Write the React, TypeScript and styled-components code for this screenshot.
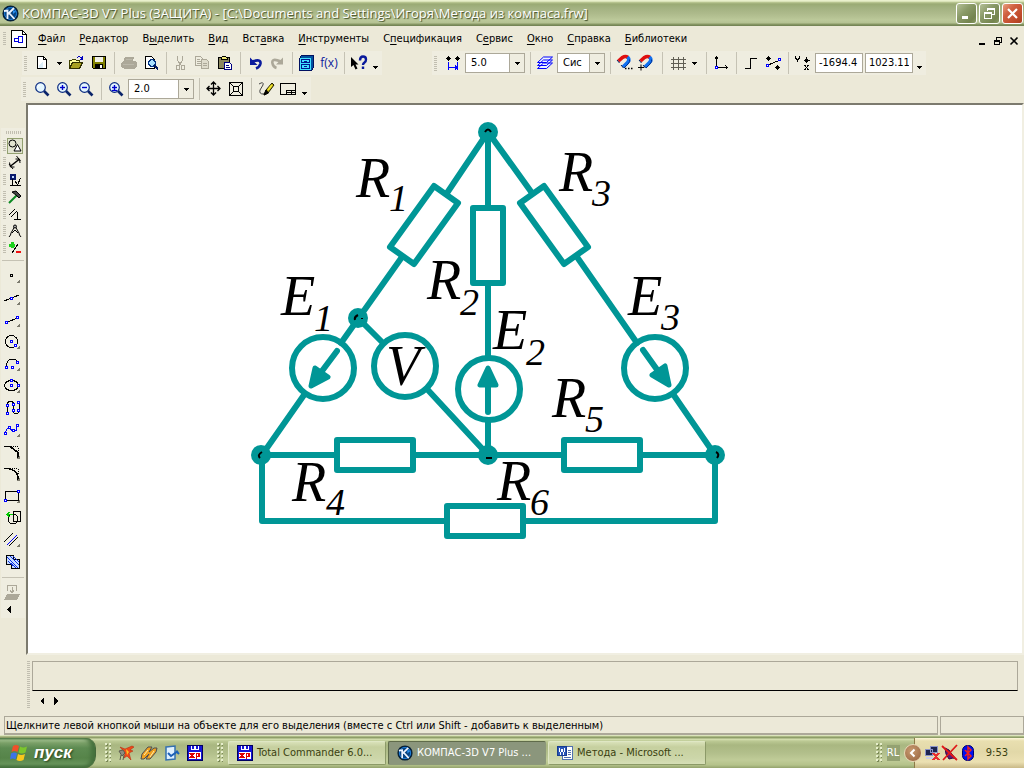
import React from "react";
import styled, { createGlobalStyle } from "styled-components";

const UI_FONT = '"DejaVu Sans Condensed", "DejaVu Sans", Tahoma, sans-serif';
const FACE = "#ece9d8";
const BAND = "#efede0";
const EDGE = "#aca899";
const TEAL = "#009696";

const GlobalStyle = createGlobalStyle`
  *, *::before, *::after { box-sizing: border-box; }
  body { margin: 0; background: ${FACE}; }
  button, input, select { font: inherit; color: inherit; margin: 0; }
`;

const Screen = styled.div`
  display: flex;
  flex-direction: column;
  min-height: 100vh;
  overflow: hidden;
  background: ${FACE};
  color: #000;
  font: 11px/14px ${UI_FONT};
`;

/* ---------- title bar ---------- */

const TitleBar = styled.header`
  display: flex;
  align-items: center;
  height: 26px;
  padding: 0 1px 0 2px;
  gap: 3px;
  background: linear-gradient(#e0e8c0 0, #f2f8d8 1px, #c0cc98 2px, #9aaa74 4px, #a3b281 8px, #aebb8c 14px, #bcc99a 20px, #b4c192 23px, #8c9c68 24px, #6e7e50 26px);
`;

const Title = styled.h1`
  flex: 1;
  min-width: 0;
  margin: 0;
  overflow: hidden;
  white-space: nowrap;
  color: #fff;
  font: 500 13px/18px "Open Sans", "Noto Sans", sans-serif;
  text-shadow: 1px 1px 1px #3c4a24;
`;

const CaptionButtons = styled.div`
  display: flex;
  gap: 2px;
`;

const CaptionButton = styled.button<{ $close?: boolean }>`
  display: grid;
  place-items: center;
  width: 21px;
  height: 21px;
  padding: 0;
  border: 1px solid #fff;
  border-radius: 3px;
  background: ${(p) =>
    p.$close
      ? "linear-gradient(135deg, #e8a080 0, #d06040 35%, #c04a2a 75%, #a84020 100%)"
      : "linear-gradient(135deg, #b4c096 0, #8a9a68 40%, #74844e 80%, #8a9a64 100%)"};
`;

/* ---------- menu ---------- */

const MenuRow = styled.nav`
  display: flex;
  align-items: center;
  height: 25px;
  padding: 0 3px 0 1px;
`;

const DocIcon = styled.span`
  display: flex;
  margin: 0 11px 0 0;
`;

const MenuList = styled.ul`
  display: flex;
  flex: 1;
  gap: 14px;
  margin: 0;
  padding: 0;
  list-style: none;
`;

const MenuButton = styled.button`
  display: block;
  padding: 0;
  border: 0;
  background: none;
  white-space: nowrap;

  u { text-underline-offset: 2px; }
`;

const ChildButtons = styled.div`
  display: flex;
  gap: 2px;
  padding-top: 4px;
`;

const PlainButton = styled.button`
  display: grid;
  place-items: center;
  width: 14px;
  height: 14px;
  padding: 0;
  border: 0;
  background: none;
`;

/* ---------- tool bars ---------- */

const ToolRow = styled.div<{ $indent: number }>`
  display: flex;
  height: 26px;
  padding-left: ${(p) => p.$indent}px;
  gap: 50px;
`;

const ToolGroup = styled.div`
  display: flex;
  align-items: center;
  height: 24px;
  background: ${BAND};
`;

const Grip = styled.span<{ $h?: number }>`
  flex: none;
  width: 3px;
  height: ${(p) => p.$h ?? 15}px;
  margin: 0 5px 0 2px;
  background: repeating-linear-gradient(#c1beb0 0 1px, transparent 1px 2px);
`;

const ToolButton = styled.button`
  display: grid;
  place-items: center;
  flex: none;
  width: 22px;
  height: 22px;
  padding: 0;
  border: 0;
  background: none;
`;

const Divider = styled.span`
  flex: none;
  width: 1px;
  height: 22px;
  margin: 0 3px 0 4px;
  background: #c5c2b4;
`;

const DropButton = styled.button<{ $w?: number; $low?: boolean }>`
  display: grid;
  place-items: center;
  flex: none;
  width: ${(p) => p.$w ?? 12}px;
  height: 22px;
  padding: ${(p) => (p.$low ? "8px 2px 0 0" : "0 2px 0 0")};
  border: 0;
  background: none;
`;

const Combo = styled.span<{ $w: number }>`
  position: relative;
  flex: none;
  width: ${(p) => p.$w}px;
  height: 20px;
  margin: 0 1px;

  select {
    width: 100%;
    height: 20px;
    padding: 0 0 0 5px;
    border: 1px solid ${EDGE};
    border-radius: 0;
    background: #fff;
    appearance: none;
  }
`;

const ComboArrow = styled.span`
  position: absolute;
  top: 1px;
  right: 1px;
  display: grid;
  place-items: center;
  width: 15px;
  height: 18px;
  border-left: 1px solid ${EDGE};
  background: ${BAND};
  pointer-events: none;
`;

const CoordInput = styled.input`
  flex: none;
  width: 48px;
  height: 20px;
  margin: 0 1px;
  padding: 0 3px 1px;
  border: 1px solid ${EDGE};
  border-radius: 0;
  background: #fff;
`;

/* ---------- work area ---------- */

const WorkArea = styled.main`
  display: flex;
  flex: 1;
  min-height: 552px;
`;

const SidePanel = styled.aside`
  flex: none;
  width: 26px;
  padding: 25px 1px 0;
`;

const SideBand = styled.div`
  display: flex;
  flex-direction: column;
  align-items: center;
  height: 490px;
  padding-top: 3px;
  background: ${BAND};
`;

const TopGrip = styled.span`
  width: 15px;
  height: 3px;
  margin-bottom: 3px;
  background: repeating-linear-gradient(90deg, #c1beb0 0 1px, transparent 1px 2px);
`;

const ModeRow = styled.div`
  display: flex;
  align-items: center;
  align-self: stretch;
  height: 17px;
  gap: 1px;
  padding-left: 2px;
`;

const ModeGrip = styled.span`
  width: 3px;
  height: 11px;
  background: repeating-linear-gradient(#c1beb0 0 1px, transparent 1px 2px);
`;

const ModeButton = styled.button<{ $on?: boolean }>`
  display: grid;
  place-items: center;
  width: 16px;
  height: 16px;
  padding: 0;
  border: 1px solid ${(p) => (p.$on ? "#93a070" : "transparent")};
  background: ${(p) => (p.$on ? "#e2e4d0" : "none")};
`;

const SideRule = styled.span`
  width: 22px;
  height: 1px;
  margin: 4px 0;
  background: #c5c2b4;
`;

const SideTool = styled.button`
  display: grid;
  place-items: center;
  width: 22px;
  height: 22px;
  padding: 0 2px 0 0;
  border: 0;
  background: none;
`;

const SideMore = styled(SideTool)`
  justify-items: start;
  height: 12px;
  padding: 0 0 0 2px;
`;

const Canvas = styled.section`
  flex: 1;
  min-width: 0;
  padding: 11px 0 0 212px;
  overflow: hidden;
  border-style: solid;
  border-width: 2px;
  border-color: #7c7a6e #f1efe2 #f1efe2 #7c7a6e;
  background: #fff;
`;

const Schematic = styled.svg`
  display: block;
  fill: none;
  stroke: ${TEAL};
  stroke-width: 6px;
  stroke-linejoin: round;
  stroke-linecap: round;

  text {
    fill: #000;
    stroke: none;
    font-family: "Liberation Serif", "Times New Roman", serif;
    font-style: italic;
  }
`;

/* ---------- property panel and status ---------- */

const PropertyPanel = styled.section`
  display: flex;
  height: 61px;
  padding: 6px 6px 0 27px;
  gap: 2px;
`;

const PanelGrip = styled.span`
  width: 3px;
  height: 48px;
  background: repeating-linear-gradient(#c1beb0 0 1px, transparent 1px 2px);
`;

const PanelBody = styled.div`
  flex: 1;
`;

const PanelBox = styled.div`
  height: 30px;
  border: 1px solid ${EDGE};
  border-bottom-color: #000;
`;

const PanelArrows = styled.div`
  display: flex;
  padding: 3px 0 0 3px;
`;

const StatusBar = styled.footer`
  display: flex;
  height: 19px;
  padding-left: 4px;
  gap: 2px;
`;

const StatusCell = styled.div<{ $w?: number }>`
  flex: ${(p) => (p.$w ? `0 0 ${p.$w}px` : "1")};
  min-width: 0;
  overflow: hidden;
  padding: 2px 1px;
  border: 1px solid ${EDGE};
  border-bottom-width: 2px;
  white-space: nowrap;
`;

/* ---------- task bar ---------- */

const TaskBar = styled.div`
  display: flex;
  align-items: stretch;
  height: 33px;
  padding-top: 3px;
  background: linear-gradient(#eef2d8 0, #c8d4a0 1px, #8e9e68 2px, #8e9e68 3px, #d8e2b4 4px, #bcc994 6px, #a9b781 10px, #b2bf8b 18px, #c0cc98 25px, #b4c28a 30px, #93a26c 33px);
`;

const StartButton = styled.button`
  display: flex;
  align-items: center;
  width: 96px;
  gap: 5px;
  padding: 0 0 1px 10px;
  border: 0;
  border-right: 1px solid #44683a;
  border-radius: 0 10px 12px 0;
  background: linear-gradient(#4f7a48 0, #a4c290 2px, #7aa068 5px, #5d8b52 10px, #568449 20px, #66935a 26px, #3f6b38 30px);
  box-shadow: inset -4px 0 4px #45703c;
  color: #fff;
  font: italic bold 17px/22px "Liberation Sans", Arial, sans-serif;
  text-shadow: 1px 1px 2px #24401c;
`;

const Dots = styled.span`
  align-self: center;
  width: 6px;
  height: 20px;
  margin: 0 5px 0 9px;
  background:
    radial-gradient(circle at 1px 1px, #e6eecb 1px, transparent 1px) 0 0 / 4px 4px,
    radial-gradient(circle at 2px 2px, #7c8a58 1px, transparent 1px) 0 0 / 4px 4px;
`;

const QuickLaunch = styled.div`
  display: flex;
  align-items: center;
  padding-right: 3px;
  gap: 3px;
`;

const QuickButton = styled.button`
  display: grid;
  place-items: center;
  width: 20px;
  height: 22px;
  padding: 0;
  border: 0;
  background: none;
`;

const Tasks = styled.div`
  display: flex;
  flex: 1;
  align-items: center;
  min-width: 0;
  gap: 2px;
`;

const Task = styled.button<{ $active?: boolean }>`
  display: flex;
  align-items: center;
  flex: 0 1 158px;
  min-width: 0;
  height: 24px;
  gap: 4px;
  padding: 0 6px 0 8px;
  overflow: hidden;
  border: 1px solid ${(p) => (p.$active ? "#5f6b4a" : "#dfe7c4")};
  border-right-color: ${(p) => (p.$active ? "#8c987a" : "#8c9a68")};
  border-bottom-color: ${(p) => (p.$active ? "#8c987a" : "#8c9a68")};
  border-radius: 2px;
  background: ${(p) => (p.$active ? "#8b967c" : "linear-gradient(#d9e1b9 0, #c6d09f 5px, #ccd6a9 16px, #d6dfb6 22px)")};
  color: ${(p) => (p.$active ? "#fff" : "#3a3f10")};
  white-space: nowrap;
`;

const Language = styled.span`
  align-self: center;
  width: 13px;
  height: 16px;
  overflow: hidden;
  background: #94a272;
  color: #fff;
  line-height: 16px;
`;

const Tray = styled.div`
  display: flex;
  align-items: center;
  gap: 2px;
  margin-left: 14px;
  padding-right: 16px;
  border-left: 1px solid #8c7a48;
  background: linear-gradient(#fdf6d8 0, #e8dfb0 3px, #e2d8a8 14px, #ebe0b2 24px, #c9b987 30px);
`;

const TrayToggle = styled.button`
  display: grid;
  place-items: center;
  width: 18px;
  height: 18px;
  margin-left: -11px;
  padding: 0;
  border: 1px solid #e8d8b8;
  border-radius: 50%;
  background: radial-gradient(circle at 40% 35%, #c89a70, #94603c);
`;

const Clock = styled.time`
  margin-left: 8px;
  color: #3a3f10;
`;

/* ---------- icon drawing ---------- */

const Glyph = styled.svg<{ $smooth?: boolean }>`
  display: block;
  flex: none;
  overflow: visible;
  fill: none;
  stroke: #000;
  shape-rendering: ${(p) => (p.$smooth ? "auto" : "crispEdges")};
`;

type IconProps = { size?: number; smooth?: boolean; children: React.ReactNode };

const Icon = ({ size = 16, smooth, children }: IconProps) => (
  <Glyph $smooth={smooth} width={size} height={size} viewBox={`0 0 ${size} ${size}`} aria-hidden="true">
    {children}
  </Glyph>
);

const Down = () => (
  <Glyph width="5" height="3" viewBox="0 0 5 3" aria-hidden="true">
    <path d="M0 0h5v1h-1v1h-1v1h-1v-1h-1v-1h-1z" fill="#000" stroke="none" />
  </Glyph>
);

const Knot = ({ x, y }: { x: number; y: number }) => (
  <rect x={x - 1} y={y - 1} width="2" height="2" fill="#fff" stroke="#00f" />
);

const Lens = ({ sign }: { sign?: "plus" | "minus" | "both" }) => (
  <Icon smooth>
    <path d="M10 10l4.500 4.500" stroke="#0a246a" strokeWidth="2.600" />
    <circle cx="6.500" cy="6.500" r="4.800" fill="#e4f6ff" stroke="#0a2a80" strokeWidth="1.200" />
    {!sign && <path d="M3.500 7a3.500 3.500 0 0 1 3-3" stroke="#fff" />}
    {sign && <path d="M4 6.500h5" stroke="#00c" strokeWidth="1.400" />}
    {(sign === "plus" || sign === "both") && <path d="M6.500 4v5" stroke="#00c" strokeWidth="1.400" />}
    {sign === "both" && <path d="M4 9.500h5" stroke="#00c" strokeWidth="1.200" />}
  </Icon>
);

const Magnet = ({ snap }: { snap?: boolean }) => (
  <Icon smooth>
    <path d="M1.500 6l4-3.500q3-2 5.500 0" stroke="#e01010" strokeWidth="3.600" />
    <path d="M10.500 2q3 3-.5 6l-4 4" stroke="#1070f0" strokeWidth="3.600" />
    <path d="M12.500 4.500q1 2-1.500 4.500l-4 4" stroke="#003090" />
    <path d="M0 5l2.500 3M4 10l2.500 3" stroke="#002060" />
    {snap ? <path d="M2 9.500v6M-1 12.500h6" stroke="#000" /> : <path d="M8 13.500h1.500M11 13.500h1.500M14 13.500h1.500" strokeWidth="1.500" />}
  </Icon>
);

const KompasLogo = ({ size = 17 }: { size?: number }) => (
  <Glyph $smooth width={size} height={size} viewBox="0 0 17 17" aria-hidden="true">
    <circle cx="8.500" cy="8.500" r="7.300" fill="#0a4480" stroke="#062038" strokeWidth="1.600" />
    <circle cx="8.500" cy="8.500" r="6" fill="none" stroke="#1c80e0" />
    <path d="M2 6l3.500-.5V14M6 9l6-6M7.500 8.500l5 5.500" stroke="#eef4ff" strokeWidth="1.800" />
    <path d="M11 5l3 1.500-3 2.500" fill="#2a90f0" stroke="none" />
  </Glyph>
);

const XpDisk = () => (
  <Icon>
    <rect x="0.500" y="0.500" width="15" height="15" fill="#1414d8" stroke="#000060" />
    <path d="M4 1h8v4h-8z" fill="#fff" stroke="none" />
    <path d="M5 1h2v3h-2zM9 1h2v3h-2z" fill="#1414d8" stroke="none" />
    <path d="M2 7h12v7h-12z" fill="#fff" stroke="none" />
    <path d="M3 8l4 5M7 8l-4 5" stroke="#e00000" strokeWidth="2" />
    <path d="M9.500 14v-5.500h2.500v3h-2.500" stroke="#e00000" strokeWidth="1.500" />
  </Icon>
);

const icons = {
  page: (
    <Icon>
      <path d="M2.500 1.500h6l3 3v9h-9z" fill="#fff" />
      <path d="M8.500 1.500v3h3" />
      <path d="M4 10l4-4v7h-4z" fill="#dceef8" stroke="none" />
    </Icon>
  ),
  open: (
    <Icon>
      <path d="M0.500 13.500v-8h2l1-1h3l1 1h3v2" fill="#ffff9c" stroke="#404000" />
      <path d="M0.500 13.500l3-6h10l-3 6z" fill="#a8a020" stroke="#303000" />
      <path d="M8 2.500q3-2 5 1M13.500 1v3h-3" stroke="#0000c0" />
    </Icon>
  ),
  save: (
    <Icon>
      <path d="M1.500 1.500h13v12h-12l-1-1z" fill="#808000" />
      <path d="M4 2h8v5h-8z" fill="#f0f0e8" stroke="none" />
      <path d="M4 9h8v4.500h-8z" fill="#000" stroke="none" />
      <path d="M9 10h2v3h-2z" fill="#fff" stroke="none" />
    </Icon>
  ),
  print: (
    <Icon>
      <path d="M4 2h9l-1 4h3l1 2v4l-3 2h-9l-4-2v-4l3-3z" fill="#aca899" stroke="none" />
      <path d="M5 4.500h6M2 9.500h11" stroke="#bbb8aa" />
    </Icon>
  ),
  preview: (
    <Icon>
      <path d="M2.500 1.500h6l3 3v9h-9z" fill="#fff" />
      <circle cx="9" cy="8" r="3.500" fill="#a8e0ff" stroke="#003080" strokeWidth="1.500" />
      <path d="M11.500 10.500l3.500 4" stroke="#001860" strokeWidth="2" />
    </Icon>
  ),
  cut: (
    <Icon>
      <path d="M4.500 1v4l3 5M9.500 1v4l-3 5" stroke="#aca899" />
      <path d="M3.500 10.500h3v4h-3zM8.500 10.500h3v4h-3z" stroke="#aca899" />
    </Icon>
  ),
  copy: (
    <Icon>
      <path d="M0.500 1.500h5l2 2v7h-7z" stroke="#aca899" />
      <path d="M2 4.500h3M2 6.500h4M2 8.500h4" stroke="#aca899" />
      <path d="M6.500 4.500h5l2 2v7h-7z" fill="#dedbcc" stroke="#aca899" />
      <path d="M8 8.500h4M8 10.500h4" stroke="#aca899" />
    </Icon>
  ),
  paste: (
    <Icon>
      <path d="M1.500 2.500h11v11h-11z" fill="#8c8860" />
      <path d="M4.500 4.500v-2l2-1.500h1.500l2 1.500v2z" fill="#f0e878" />
      <path d="M7.500 7.500h5l2 2v5h-7z" fill="#fff" stroke="#000080" />
      <path d="M9 10.500h3M9 12.500h4" stroke="#000080" />
    </Icon>
  ),
  undo: (
    <Icon smooth>
      <path d="M5 6.500q9-3 8.500 2-.7 3.500-4.500 5" stroke="#0a1a9c" strokeWidth="2.600" />
      <path d="M3 2.500v7.500h7.500z" fill="#0a1a9c" stroke="none" />
    </Icon>
  ),
  redo: (
    <Icon smooth>
      <path d="M12 6.500q-10-4-8.500 2 .7 3.500 4 4.500" stroke="#aca899" strokeWidth="2.600" />
      <path d="M14 2.500v7h-7z" fill="#aca899" stroke="none" />
    </Icon>
  ),
  manager: (
    <Icon>
      <path d="M0.500 3.500l2-3h12v12l-2 3h-12z" fill="#0050a0" stroke="#001060" />
      <path d="M1 3h11v12h-11z" fill="#40e0ff" stroke="none" />
      <path d="M2.500 4.500h8v3h-8zM2.500 9.500h8v4h-8zM5 6h3M5 11.500h3" stroke="#001890" />
    </Icon>
  ),
  help: (
    <Icon smooth>
      <path d="M0 2v10l2.500-2 2 4.500 2-1-2-4h3z" fill="#000" stroke="none" />
      <path d="M9 5.500q0-4 3-4t3 3q0 2-1.500 3t-1.500 2.500M12 11.500v2.500" stroke="#0a1a9c" strokeWidth="2.400" />
    </Icon>
  ),
  step: (
    <Icon>
      <path d="M3.500 1v5M1 3.500h5M12.500 1v5M10 3.500h5" />
      <path d="M2.500 2.500h2v2h-2zM11.500 2.500h2v2h-2z" fill="#000" />
      <path d="M3.500 7v8M12.500 7v8M4 12.500h8M10 10.500l2 2-2 2" stroke="#00f" />
    </Icon>
  ),
  layers: (
    <Icon smooth>
      <path d="M0.500 13.500h9l6-5.500h-9zM0.500 10.500h9l6-5.500h-9zM0.500 7.500h9l6-5.500h-9z" fill="#eef4ff" stroke="#00f" />
    </Icon>
  ),
  grid: (
    <Icon>
      <path d="M4.500 2v13M9.500 2v13M14.500 2v13M2 4.500h15M2 8.500h15M2 12.500h15" stroke="#605e54" />
    </Icon>
  ),
  axes: (
    <Icon>
      <path d="M3.500 1v12M4 12.500h11M1.500 4.500l2-2.500 2 2.500M12.500 10.500l2 2-2 2" />
      <Knot x={3.5} y={12.5} />
    </Icon>
  ),
  ortho: (
    <Icon>
      <path d="M2 13.500h5.500v-10h6" />
    </Icon>
  ),
  roundTo: (
    <Icon>
      <path d="M3.500 1v5M1 3.500h5M12.500 10v5M10 12.500h5" />
      <path d="M2.500 2.500h2v2h-2zM11.500 11.500h2v2h-2z" />
      <path d="M2 10.500l12-5" />
      <Knot x={2.5} y={10.5} />
      <Knot x={14.5} y={4.5} />
    </Icon>
  ),
  coords: (
    <Icon>
      <path d="M0.500 1v2l2 2 2-2v-2M2.500 4v3M11.500 2v6M8.500 5h6" />
      <path d="M10.500 4h2v2h-2z" fill="#000" />
      <path d="M9.500 10l4 5M13.500 10l-4 5" />
    </Icon>
  ),
  move: (
    <Icon smooth>
      <path d="M7.500 1v13M1 7.500h13M5 3.500l2.500-2.500 2.500 2.500M5 11.500l2.500 2.500 2.500-2.500M3.500 5l-2.500 2.500 2.500 2.500M11.500 5l2.500 2.500-2.500 2.500" strokeWidth="1.300" />
    </Icon>
  ),
  fit: (
    <Icon>
      <path d="M1.500 1.500h13v13h-13zM5.500 5.500h5v5h-5zM2 2l3 3M14 2l-3 3M2 14l3-3M14 14l-3-3" />
    </Icon>
  ),
  redraw: (
    <Icon smooth>
      <path d="M1 3q5-3 4 1l-3 5q-1 4 3 4l3-1" stroke="#444" />
      <path d="M6 14l2-5 6-7 2 2-6 8z" fill="#b0a010" stroke="#202000" />
      <path d="M10 9l4-5" stroke="#f4e830" strokeWidth="2" />
      <path d="M6 14l2-5 2.500 3z" fill="#000" />
    </Icon>
  ),
  layout: (
    <Icon>
      <path d="M0.500 2.500h15v11h-15zM6.500 13.500v-4h9M6.500 11.500h9M11.500 9.500v4" />
    </Icon>
  ),
};

type Item = keyof typeof icons;

const Tool = ({ icon, label }: { icon: Item; label: string }) => (
  <ToolButton type="button" aria-label={label}>{icons[icon]}</ToolButton>
);

const FxText = styled.span`
  color: #0a1a9c;
  font: 500 12px/16px "Open Sans", "Noto Sans", sans-serif;
`;

/* ---------- side tools ---------- */

const Corner = () => <path d="M16 11v4h-4z" fill="#7c7a6e" stroke="none" />;

const modeIcons = [
  <Icon size={14} smooth key="geometry"><circle cx="4.500" cy="4.500" r="3.500" /><path d="M9.500 5.500l3.500 6.500h-7z" fill="#fff" /></Icon>,
  <Icon size={14} smooth key="dims"><path d="M2 10.500l9-7" strokeWidth="1.500" /><path d="M1.500 6.500l1 4.500 4 0M7.500 3l4 0 .5 4" /><path d="M1 8l4 5M8.500 0l4 5" /></Icon>,
  <Icon size={14} key="marks"><path d="M2.500 1.500h4v4h-4z" fill="#c0d8ff" stroke="#0a1a6c" strokeWidth="2" /><path d="M4.500 6v6M2 12.500h11M7 8l2.500 4 3-7" /></Icon>,
  <Icon size={14} smooth key="edit"><path d="M1 13l8-8" stroke="#0a8a20" strokeWidth="2" /><path d="M4 2l4-1 5 5-2 2-3-3z" fill="#444" /></Icon>,
  <Icon size={14} key="param"><path d="M1 8l6-6M3 10l6-6M9.500 5v7M6 12.500h7" /></Icon>,
  <Icon size={14} smooth key="measure"><path d="M1 13q2-2 2-4l4-7 4 7q0 2 2 4M4 9l3-3 3 3" /><circle cx="7" cy="2.500" r="1.500" fill="#aaa" /></Icon>,
  <Icon size={14} key="select"><path d="M4 1v6M1 4h6" stroke="#1cd01c" strokeWidth="3" /><path d="M4 12l6-9" /><path d="M8 11h5" stroke="#f01010" strokeWidth="2" /></Icon>,
];

const modeLabels = ["Геометрия", "Размеры", "Обозначения", "Редактирование", "Параметризация", "Измерения", "Выделение"];

const sideIcons: { label: string; art: React.ReactNode }[] = [
  { label: "Точка", art: <><rect x="6.500" y="6.500" width="2" height="2" /><Corner /></> },
  { label: "Вспомогательная прямая", art: <><path d="M0 11l15-6" /><Knot x={7.5} y={8.5} /><Corner /></> },
  { label: "Отрезок", art: <><path d="M2 11l11-5" /><Knot x={2.5} y={10.5} /><Knot x={13.5} y={5.5} /><Corner /></> },
  { label: "Окружность", art: <><circle cx="7.500" cy="7.500" r="6" /><Knot x={7.5} y={7.5} /><Knot x={11.5} y={11.5} /><Corner /></> },
  { label: "Дуга", art: <><path d="M2.500 11q0-8 6-8 4 0 5 3" /><Knot x={2.5} y={11.5} /><Knot x={8.5} y={11.5} /><Knot x={13.5} y={6.5} /><Corner /></> },
  { label: "Эллипс", art: <><ellipse cx="7.500" cy="7.500" rx="7" ry="5" /><Knot x={7.5} y={7.5} /><Knot x={7.5} y={2.5} /><Knot x={14.5} y={7.5} /><Corner /></> },
  { label: "Непрерывный ввод", art: <><path d="M3.500 13v-8q0-4 3-4t3 4v6q0 3 2.500 3t3-3v-8" /><Knot x={3.5} y={13} /><Knot x={3.5} y={5.5} /><Knot x={9.5} y={4.5} /><Knot x={9.5} y={10.5} /><Knot x={14.5} y={2.5} /><Knot x={14.5} y={10.5} /></> },
  { label: "Кривая Безье", art: <><path d="M1.500 11q1-6 4-5 4 5 7 2l1-5" stroke="#00f" /><Knot x={1.5} y={11.5} /><Knot x={5.5} y={5.5} /><Knot x={9.5} y={8.5} /><Knot x={13.5} y={3.5} /><Corner /></> },
  { label: "Фаска", art: <><path d="M0 2.500h6l8 6v6" strokeWidth="1.500" /><path d="M7 2.500h7v6" strokeDasharray="1 1" /><Corner /></> },
  { label: "Скругление", art: <><path d="M0 2.500h4q9 2 10 8v4" strokeWidth="1.500" /><path d="M6 2.500h8v6" strokeDasharray="1 1" /><Corner /></> },
  { label: "Прямоугольник", art: <><path d="M1.500 3.500h13v9h-13z" /><Knot x={1.5} y={12.5} /><Knot x={14.5} y={3.5} /><Corner /></> },
  { label: "Собрать контур", art: <><path d="M9.500 1.500h7v10h-7z" strokeWidth="1.500" /><circle cx="9" cy="9" r="5" /><path d="M3 4.500h6M5.500 2l-2.500 2.500 2.500 2.500" stroke="#0c0" strokeWidth="1.500" /></> },
  { label: "Эквидистанта", art: <><path d="M0 10l9-9M5 14l9-9" /><path d="M3 13l10-10" stroke="#00f" /><Corner /></> },
  { label: "Штриховка", art: <><path d="M2.500 1.500h7v4h6v9h-8v-4h-5z" fill="#c8dcff" strokeWidth="1.500" /><path d="M3 3l11 11M6 2l9 9M4 7l8 7M9 2l6 6" stroke="#0a30e0" /></> },
];

/* ---------- schematic ---------- */

const labels: [string, number, number, string, number, number][] = [
  ["R", 356, 197, "1", 389, 211],
  ["R", 427, 299, "2", 460, 315],
  ["R", 559, 191, "3", 592, 206],
  ["E", 281, 315, "1", 314, 331],
  ["E", 493, 349, "2", 526, 365],
  ["E", 628, 315, "3", 661, 330],
  ["R", 292, 501, "4", 326, 515],
  ["R", 552, 417, "5", 585, 432],
  ["R", 497, 500, "6", 530, 515],
];

const nodes = [[488, 132], [358, 318], [261, 455], [488, 455], [715, 455]];

const CircuitDrawing = () => (
  <Schematic width="500" height="430" viewBox="240 116 500 430" role="img" aria-label="Схема электрической цепи">
    <path d="M488 132L447 193M402 257L341 343M304 395L262 455V521H447M523 521H715V455L673 394M637 343L577 257M532 193L488 132V207M488 283V358M488 420V455M262 455H337M413 455H564M640 455H715M358 318L383 343M427 389L488 455" />
    <path d="M434 186L458 203L414 264L390 247ZM544 186L588 247L564 264L520 203Z" />
    <path d="M473 208H503V283H473ZM337 440H413V470H337ZM564 440H640V470H564ZM447 506H523V536H447Z" />
    <circle cx="323" cy="368" r="31" />
    <circle cx="405" cy="366" r="31" />
    <circle cx="489" cy="389" r="31" />
    <circle cx="655" cy="368" r="31" />
    <path d="M337 351L322 371M488 412V382M643 350L658 371" />
    <path d="M315 368L328 377L311 386ZM480 385H496L488 368ZM652 375L665 366L669 385Z" fill={TEAL} strokeWidth="5" />
    {nodes.map(([x, y]) => (
      <circle key={`${x}-${y}`} cx={x} cy={y} r="10" fill={TEAL} stroke="none" />
    ))}
    <path d="M485 132q3-5 6 0M355 320q-1-3 3-5M362 318v1M260 458q-3-3 2-6M486 458h6M716 452q4 2 1 6" stroke="#000" strokeWidth="2" strokeLinecap="butt" />
    {labels.map(([letter, x, y, index, ix, iy]) => (
      <React.Fragment key={letter + index}>
        <text x={x} y={y} fontSize="56">{letter}</text>
        <text x={ix} y={iy} fontSize="38">{index}</text>
      </React.Fragment>
    ))}
    <text x="386" y="385" fontSize="56">V</text>
  </Schematic>
);

/* ---------- page ---------- */

const menus: [string, string, string][] = [
  ["", "Ф", "айл"],
  ["", "Р", "едактор"],
  ["В", "ы", "делить"],
  ["", "В", "ид"],
  ["Вст", "а", "вка"],
  ["", "И", "нструменты"],
  ["С", "п", "ецификация"],
  ["С", "е", "рвис"],
  ["", "О", "кно"],
  ["", "С", "правка"],
  ["", "Б", "иблиотеки"],
];

const Picker = ({ w, value, label }: { w: number; value: string; label: string }) => (
  <Combo $w={w}>
    <select aria-label={label} defaultValue={value}>
      <option>{value}</option>
    </select>
    <ComboArrow><Down /></ComboArrow>
  </Combo>
);

export default function App() {
  return (
    <Screen>
      <GlobalStyle />
      <TitleBar>
        <KompasLogo />
        <Title>КОМПАС-3D V7 Plus (ЗАЩИТА) - [C:\Documents and Settings\Игоря\Метода из компаса.frw]</Title>
        <CaptionButtons>
          <CaptionButton type="button" aria-label="Свернуть">
            <Icon size={15}><path d="M3 11.500h6" stroke="#fff" strokeWidth="3" /></Icon>
          </CaptionButton>
          <CaptionButton type="button" aria-label="Восстановить">
            <Icon size={15}><path d="M5.500 5v-2.500h7v6h-2.500M5 3h8M2.500 6.500h7v6h-7zM2 7h8" stroke="#fff" /></Icon>
          </CaptionButton>
          <CaptionButton type="button" $close aria-label="Закрыть">
            <Icon size={15} smooth><path d="M3 3l9 9M12 3l-9 9" stroke="#fff" strokeWidth="2.200" /></Icon>
          </CaptionButton>
        </CaptionButtons>
      </TitleBar>

      <MenuRow>
        <Grip $h={13} />
        <DocIcon>
          <Glyph width="16" height="18" viewBox="0 0 16 18" aria-hidden="true">
            <path d="M0.500 0.500h11l4 4v13h-15z" fill="#fff" />
            <path d="M11.500 0.500v4h4M15 5v12.500h-14" />
            <path d="M7.500 6.500h4v6h-4zM3.500 8.500h4v3h-4z" stroke="#0000e0" />
          </Glyph>
        </DocIcon>
        <MenuList>
          {menus.map(([before, key, after]) => (
            <li key={before + key + after}>
              <MenuButton type="button">{before}<u>{key}</u>{after}</MenuButton>
            </li>
          ))}
        </MenuList>
        <ChildButtons>
          <PlainButton type="button" aria-label="Свернуть документ">
            <Icon size={10}><path d="M2 8h6" strokeWidth="2" /></Icon>
          </PlainButton>
          <PlainButton type="button" aria-label="Восстановить документ">
            <Icon size={10}><path d="M3.500 4v-3h5v5h-2M3 1.500h6M1.500 4.500h5v4h-5zM1 5h6" /></Icon>
          </PlainButton>
          <PlainButton type="button" aria-label="Закрыть документ">
            <Icon size={10} smooth><path d="M1.500 1.500l7 7M8.500 1.500l-7 7" strokeWidth="1.600" /></Icon>
          </PlainButton>
        </ChildButtons>
      </MenuRow>

      <ToolRow $indent={22}>
        <ToolGroup>
          <Grip />
          <Tool icon="page" label="Создать" />
          <DropButton type="button" aria-label="Варианты создания"><Down /></DropButton>
          <Tool icon="open" label="Открыть" />
          <Tool icon="save" label="Сохранить" />
          <Divider />
          <Tool icon="print" label="Печать" />
          <Tool icon="preview" label="Просмотр" />
          <Divider />
          <Tool icon="cut" label="Вырезать" />
          <Tool icon="copy" label="Копировать" />
          <Tool icon="paste" label="Вставить" />
          <Divider />
          <Tool icon="undo" label="Отменить" />
          <Tool icon="redo" label="Повторить" />
          <Divider />
          <Tool icon="manager" label="Менеджер библиотек" />
          <ToolButton type="button"><FxText>f(x)</FxText></ToolButton>
          <Divider />
          <Tool icon="help" label="Справка" />
          <DropButton type="button" $low aria-label="Настройка панели"><Down /></DropButton>
        </ToolGroup>
        <ToolGroup>
          <Grip />
          <Tool icon="step" label="Шаг курсора" />
          <Picker w={60} value="5.0" label="Шаг" />
          <Divider />
          <Tool icon="layers" label="Слои" />
          <Picker w={48} value="Сис" label="Слой" />
          <Divider />
          <ToolButton type="button" aria-label="Привязки"><Magnet /></ToolButton>
          <ToolButton type="button" aria-label="Запретить привязки"><Magnet snap /></ToolButton>
          <Divider />
          <Tool icon="grid" label="Сетка" />
          <DropButton type="button" $w={14} aria-label="Настройка сетки"><Down /></DropButton>
          <Divider />
          <Tool icon="axes" label="Локальная система координат" />
          <Divider />
          <Tool icon="ortho" label="Ортогональное черчение" />
          <Tool icon="roundTo" label="Округление" />
          <Divider />
          <Tool icon="coords" label="Координаты" />
          <CoordInput aria-label="X" defaultValue="-1694.4" />
          <CoordInput aria-label="Y" defaultValue="1023.11" />
          <DropButton type="button" $low aria-label="Настройка панели"><Down /></DropButton>
        </ToolGroup>
      </ToolRow>

      <ToolRow $indent={21}>
        <ToolGroup>
          <Grip />
          <ToolButton type="button" aria-label="Увеличить рамкой"><Lens /></ToolButton>
          <ToolButton type="button" aria-label="Увеличить"><Lens sign="plus" /></ToolButton>
          <ToolButton type="button" aria-label="Уменьшить"><Lens sign="minus" /></ToolButton>
          <Divider />
          <ToolButton type="button" aria-label="Масштаб"><Lens sign="both" /></ToolButton>
          <Picker w={66} value="2.0" label="Текущий масштаб" />
          <Divider />
          <Tool icon="move" label="Сдвинуть" />
          <Tool icon="fit" label="Показать все" />
          <Divider />
          <Tool icon="redraw" label="Обновить изображение" />
          <Tool icon="layout" label="Вид окна" />
          <DropButton type="button" $low aria-label="Настройка панели"><Down /></DropButton>
        </ToolGroup>
      </ToolRow>

      <WorkArea>
        <SidePanel>
          <SideBand>
            <TopGrip />
            {modeIcons.map((art, i) => (
              <ModeRow key={modeLabels[i]}>
                <ModeGrip />
                <ModeButton type="button" $on={i === 0} aria-label={modeLabels[i]}>{art}</ModeButton>
              </ModeRow>
            ))}
            <SideRule />
            {sideIcons.map(({ label, art }) => (
              <SideTool type="button" key={label} aria-label={label}><Icon>{art}</Icon></SideTool>
            ))}
            <SideRule />
            <SideTool type="button" aria-label="Вставить фрагмент">
              <Icon>
                <path d="M3.500 6v-5.500h9v5.500M8 2v5M6 5.500l2 2 2-2" stroke={EDGE} />
                <path d="M3 9h13l-3 6h-13z" fill={EDGE} stroke="none" />
              </Icon>
            </SideTool>
            <SideMore type="button" aria-label="Ещё">
              <Icon size={10}><path d="M7 1v7l-4-3.500z" fill="#000" stroke="none" /></Icon>
            </SideMore>
          </SideBand>
        </SidePanel>
        <Canvas>
          <CircuitDrawing />
        </Canvas>
      </WorkArea>

      <PropertyPanel>
        <PanelGrip />
        <PanelBody>
          <PanelBox />
          <PanelArrows>
            <PlainButton type="button" aria-label="Назад">
              <Icon size={8}><path d="M6 0v8l-4-4z" fill="#000" stroke="none" /></Icon>
            </PlainButton>
            <PlainButton type="button" aria-label="Вперёд">
              <Icon size={8}><path d="M2 0v8l4-4z" fill="#000" stroke="none" /></Icon>
            </PlainButton>
          </PanelArrows>
        </PanelBody>
      </PropertyPanel>

      <StatusBar>
        <StatusCell>Щелкните левой кнопкой мыши на объекте для его выделения (вместе с Ctrl или Shift - добавить к выделенным)</StatusCell>
        <StatusCell $w={84} />
      </StatusBar>

      <TaskBar>
        <StartButton type="button">
          <Icon size={19} smooth>
            <g stroke="none">
              <path d="M3 3q3-2 6 0l-1.500 6q-3-2-6 0z" fill="#f0502a" />
              <path d="M10 3.500q3 2 7 0l-1.500 6q-4 2-7 0z" fill="#7cc62c" />
              <path d="M1 10.500q3-2 6 0l-1.500 6q-3-2-5.500 0z" fill="#3c74e8" />
              <path d="M8 11q3 2 7 0l-1.500 6q-4 2-7 0z" fill="#f8c81c" />
            </g>
          </Icon>
          пуск
        </StartButton>
        <Dots />
        <QuickLaunch>
          <QuickButton type="button" aria-label="The Bat">
            <Icon smooth>
              <path d="M2 2l5 2 7-3 2 1-4 3 3 1-4 2 2 7-4-4-3 2 1-5z" fill="#f04818" stroke="#b02008" strokeWidth="0.500" />
              <path d="M8 4l3 3-2 3z" fill="#ffc020" stroke="none" />
              <path d="M1 6l4-1 2 3-3 3zM3 10l-1 5M6 10l-1 5" fill="#8c8c80" stroke="#5c5c50" />
            </Icon>
          </QuickButton>
          <QuickButton type="button" aria-label="Winamp">
            <Icon smooth>
              <path d="M1 9l6-7h4l-3 5 5-4h3l-1 4-6 7h-4l3-5-5 5h-3z" fill="#f0a020" stroke="#4c4c50" />
              <path d="M3 10l4-5M9 12l4-6" stroke="#fff0b0" />
            </Icon>
          </QuickButton>
          <QuickButton type="button" aria-label="Рабочий стол">
            <Icon smooth>
              <path d="M2 2l9-1v13l-9 1z" fill="#dff0ff" stroke="#3470b0" strokeWidth="1.500" />
              <path d="M4 8l3 3 7-5M12 6l3 3" stroke="#1c60b8" strokeWidth="2" />
            </Icon>
          </QuickButton>
          <QuickButton type="button" aria-label="Total Commander"><XpDisk /></QuickButton>
        </QuickLaunch>
        <Dots />
        <Tasks>
          <Task type="button"><XpDisk />Total Commander 6.0...</Task>
          <Task type="button" $active><KompasLogo size={16} />КОМПАС-3D V7 Plus ...</Task>
          <Task type="button">
            <Icon>
              <path d="M5.500 1.500h10v13h-10z" fill="#fff" stroke="#5070b0" />
              <path d="M11 5.500h3M11 7.500h3M11 9.500h3M7 12.500h7" stroke="#5070b0" />
              <path d="M0.500 1.500h9v9h-9z" fill="#2a56b8" stroke="#183c90" />
              <path d="M2 3.500l1.500 5 1.500-4 1.500 4 1.500-5" stroke="#fff" />
            </Icon>
            Метода - Microsoft ...
          </Task>
        </Tasks>
        <Dots />
        <Language>RL</Language>
        <Tray>
          <TrayToggle type="button" aria-label="Показать скрытые значки">
            <Icon size={8} smooth><path d="M5.500 0.500l-3.500 3.500 3.500 3.500" stroke="#fff" strokeWidth="2" /></Icon>
          </TrayToggle>
          <Icon>
            <path d="M6.500 1.500h7v6h-7zM1.500 4.500h7v6h-7z" fill="#1c2450" stroke="#8c94c8" />
            <path d="M2 12h7v2h-7z" fill="#c8cce8" stroke="none" />
            <path d="M9 8l6 7M15 8l-6 7" stroke="#e83030" strokeWidth="2" />
          </Icon>
          <Icon smooth>
            <path d="M3 3l4 2 2 3 5 6-3-1-4 1-3-5z" fill="#601878" stroke="#300840" />
            <path d="M0 1l15 14M15 0l-14 15" stroke="#e01818" strokeWidth="1.800" />
          </Icon>
          <Icon smooth>
            <rect x="2.500" y="0.500" width="11" height="15" rx="5" fill="#0010f0" stroke="#000070" />
            <path d="M5 5l6 6-3 3v-12l3 3-6 6" stroke="#f02020" strokeWidth="1.500" />
          </Icon>
          <Clock>9:53</Clock>
        </Tray>
      </TaskBar>
    </Screen>
  );
}
